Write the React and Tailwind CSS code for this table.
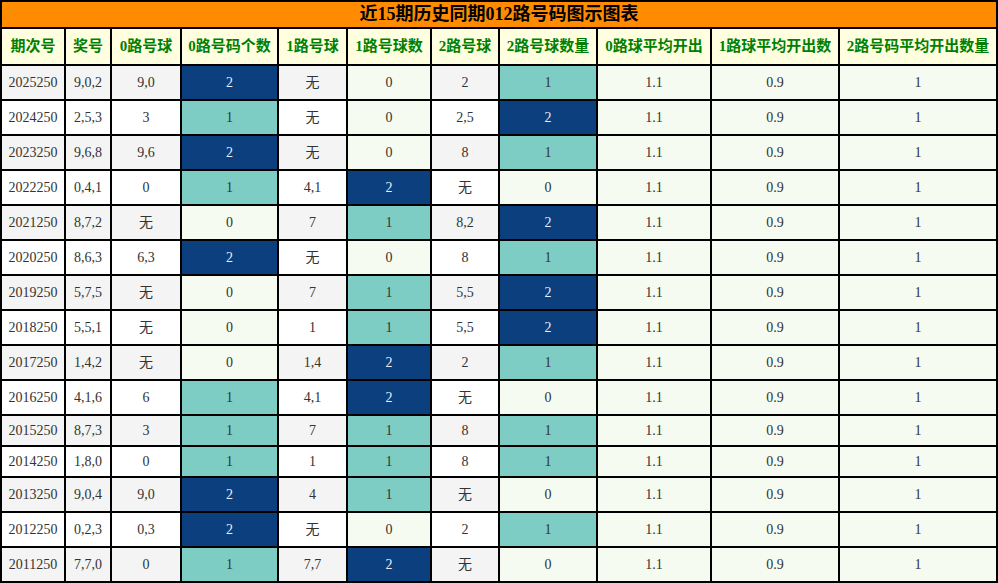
import React from 'react';

const COLS = 'grid-cols-[62px_44px_68px_95px_67px_82px_66px_96px_112px_126px_156px]';

const HEADERS = ['期次号', '奖号', '0路号球', '0路号码个数', '1路号球', '1路号球数', '2路号球', '2路号球数量', '0路球平均开出', '1路球平均开出数', '2路号码平均开出数量'];

// [期次, 奖号, 0路号球, 0路个数, 1路号球, 1路个数, 2路号球, 2路个数]
const ROWS = [
  ['2025250', '9,0,2', '9,0', 2, '无', 0, '2', 1],
  ['2024250', '2,5,3', '3', 1, '无', 0, '2,5', 2],
  ['2023250', '9,6,8', '9,6', 2, '无', 0, '8', 1],
  ['2022250', '0,4,1', '0', 1, '4,1', 2, '无', 0],
  ['2021250', '8,7,2', '无', 0, '7', 1, '8,2', 2],
  ['2020250', '8,6,3', '6,3', 2, '无', 0, '8', 1],
  ['2019250', '5,7,5', '无', 0, '7', 1, '5,5', 2],
  ['2018250', '5,5,1', '无', 0, '1', 1, '5,5', 2],
  ['2017250', '1,4,2', '无', 0, '1,4', 2, '2', 1],
  ['2016250', '4,1,6', '6', 1, '4,1', 2, '无', 0],
  ['2015250', '8,7,3', '3', 1, '7', 1, '8', 1],
  ['2014250', '1,8,0', '0', 1, '1', 1, '8', 1],
  ['2013250', '9,0,4', '9,0', 2, '4', 1, '无', 0],
  ['2012250', '0,2,3', '0,3', 2, '无', 0, '2', 1],
  ['2011250', '7,7,0', '0', 1, '7,7', 2, '无', 0],
];

const COUNT_BG = {
  2: 'bg-[#0b3f7e] text-[#e8eef6]',
  1: 'bg-[#7ecdc4] text-[#333]',
  0: 'bg-[#f5fbf0] text-[#333]',
};

function Cell({ className = '', children }) {
  return <div className={`flex items-center justify-center ${className}`}>{children}</div>;
}

export default function App() {
  return (
    <div className="w-[998px] bg-white font-['Liberation_Serif','Noto_Sans_CJK_SC',serif]">
      <div className={`grid ${COLS} gap-[2px] bg-black p-[2px] w-[998px]`}>
        <Cell className="col-span-11 h-[25px] bg-[#ff8c00] text-[18px] font-bold text-black">近15期历史同期012路号码图示图表</Cell>
        {HEADERS.map(h => (
          <Cell key={h} className="h-[35px] bg-[#ffffe0] text-[15px] font-bold text-[#008000] whitespace-nowrap">{h}</Cell>
        ))}
        {ROWS.map((r, i) => {
          const stripe = i % 2 === 0 ? 'bg-[#f4f4f4]' : 'bg-white';
          const tall = r.includes('无');
          const h = tall ? 'h-[33px]' : 'h-[29px]';
          const txt = 'text-[14px] text-[#333]';
          return (
            <React.Fragment key={r[0]}>
              <Cell className={`${h} ${stripe} ${txt}`}>{r[0]}</Cell>
              <Cell className={`${h} ${stripe} ${txt}`}>{r[1]}</Cell>
              <Cell className={`${h} ${stripe} ${txt}`}>{r[2]}</Cell>
              <Cell className={`${h} ${COUNT_BG[r[3]]} text-[14px]`}>{r[3]}</Cell>
              <Cell className={`${h} ${stripe} ${txt}`}>{r[4]}</Cell>
              <Cell className={`${h} ${COUNT_BG[r[5]]} text-[14px]`}>{r[5]}</Cell>
              <Cell className={`${h} ${stripe} ${txt}`}>{r[6]}</Cell>
              <Cell className={`${h} ${COUNT_BG[r[7]]} text-[14px]`}>{r[7]}</Cell>
              <Cell className={`${h} bg-[#f5fbf0] ${txt}`}>1.1</Cell>
              <Cell className={`${h} bg-[#f5fbf0] ${txt}`}>0.9</Cell>
              <Cell className={`${h} bg-[#f5fbf0] ${txt}`}>1</Cell>
            </React.Fragment>
          );
        })}
      </div>
    </div>
  );
}
